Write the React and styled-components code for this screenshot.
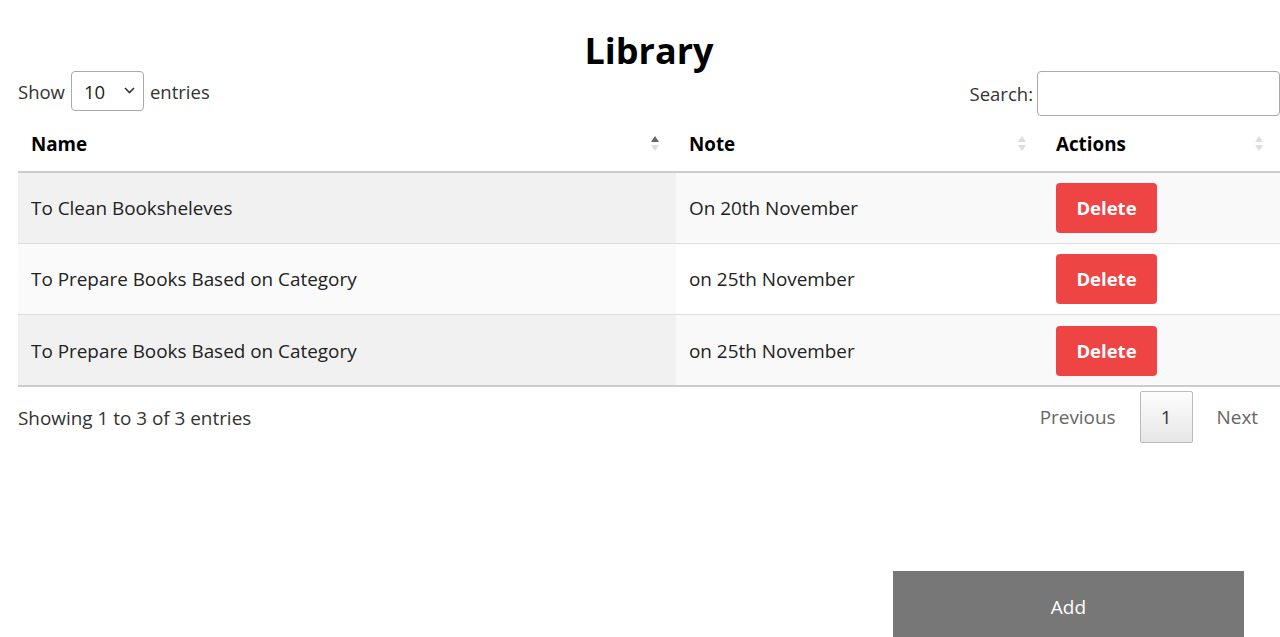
import React from "react";
import styled, { createGlobalStyle } from "styled-components";

const Global = createGlobalStyle`
  html, body { margin: 0; padding: 0; background: #fff; }
  body { font-family: "Open Sans", "Noto Sans", sans-serif; color: #222; overflow: hidden; }
`;

const Page = styled.div`
  width: 1262px;
  margin-left: 18px;
  display: flex;
  flex-direction: column;
`;

const Title = styled.h1`
  margin: 28px 0 0;
  text-align: center;
  font-size: 36px;
  line-height: 46px;
  font-weight: 700;
  color: #000;
  height: 40px;
`;

const Toolbar = styled.div`
  display: flex;
  justify-content: space-between;
  align-items: center;
  height: 46px;
  margin-top: 2px;
`;

const Label = styled.label`
  display: flex;
  align-items: center;
  gap: ${(p) => p.$gap}px;
  font-size: 18.5px;
  color: #333;
  margin-top: ${(p) => p.$mt || 0}px;
`;

const SelectBox = styled.div`
  position: relative;
  width: 73px;
  height: 40px;
  box-sizing: border-box;
  border: 1px solid #aaa;
  border-radius: 4px;
  display: flex;
  align-items: center;
  padding-left: 12px;
  font-size: 18.5px;
  color: #222;
`;

const Chevron = styled.svg`
  position: absolute;
  right: 8px;
  top: 15px;
`;

const SearchInput = styled.input`
  width: 243px;
  height: 45px;
  box-sizing: border-box;
  border: 1px solid #aaa;
  border-radius: 4px;
  font-size: 18px;
`;

const Table = styled.table`
  width: 100%;
  border-collapse: collapse;
  margin-top: 6px;
  table-layout: fixed;
`;

const Th = styled.th`
  position: relative;
  text-align: left;
  height: 50px;
  padding: 0 13px 6px;
  box-sizing: border-box;
  font-size: 18.8px;
  font-weight: 700;
  color: #000;
  border-bottom: 2px solid #ccc;
  width: ${(p) => p.$w}px;
`;

const SortIcon = styled.span`
  position: absolute;
  right: ${(p) => p.$r}px;
  top: 14px;
  display: flex;
  flex-direction: column;
  gap: 3px;
`;

const Tri = styled.span`
  width: 0;
  height: 0;
  border-left: 4px solid transparent;
  border-right: 4px solid transparent;
  ${(p) =>
    p.$up
      ? `border-bottom: 6px solid ${p.$dark ? "#666" : "#ddd"};`
      : `border-top: 6px solid ${p.$dark ? "#666" : "#ddd"};`}
`;

const Tr = styled.tr`
  height: ${(p) => (p.$last ? 72 : 71)}px;
  border-bottom: ${(p) => (p.$last ? "2px solid #ccc" : "1px solid #ddd")};
`;

const Td = styled.td`
  padding: ${(p) => (p.$last ? "2px 13px 0" : "0 13px")};
  font-size: 18.9px;
  color: #222;
  background: ${(p) => p.$bg};
`;

const DeleteBtn = styled.button`
  width: 101px;
  height: 50px;
  border: none;
  border-radius: 4px;
  background: #ef4444;
  color: #fff;
  font-family: "Open Sans", sans-serif;
  font-weight: 700;
  font-size: 18.5px;
  display: flex;
  align-items: center;
  justify-content: center;
`;

const Footer = styled.div`
  display: flex;
  justify-content: space-between;
  align-items: flex-start;
  padding-top: 4px;
`;

const Info = styled.div`
  font-size: 18.9px;
  color: #333;
  padding-top: 14px;
`;

const Pager = styled.div`
  display: flex;
  align-items: center;
  margin-right: -2px;
`;

const PageLink = styled.span`
  font-size: 18.9px;
  color: #666;
  padding: 0 24px;
`;

const PageCurrent = styled.span`
  width: 53px;
  height: 52px;
  box-sizing: border-box;
  border: 1px solid #bbb;
  border-radius: 2px;
  background: linear-gradient(to bottom, #fdfdfd 0%, #e6e6e6 100%);
  display: flex;
  align-items: center;
  justify-content: center;
  font-size: 18.9px;
  color: #333;
`;

const AddRow = styled.div`
  display: flex;
  justify-content: flex-end;
  margin-top: 128px;
  padding-right: 36px;
`;

const AddBtn = styled.button`
  width: 351px;
  height: 72px;
  border: none;
  background: #777;
  color: #fff;
  font-family: "Open Sans", sans-serif;
  font-size: 19px;
  display: flex;
  justify-content: center;
  padding-top: 23px;
  box-sizing: border-box;
`;

const rows = [
  { name: "To Clean Bookshelves".replace("shelves", "sheleves"), note: "On 20th November" },
  { name: "To Prepare Books Based on Category", note: "on 25th November" },
  { name: "To Prepare Books Based on Category", note: "on 25th November" },
];

const Sort = ({ r, active }) => (
  <SortIcon $r={r}>
    <Tri $up $dark={active} />
    <Tri />
  </SortIcon>
);

export default function App() {
  return (
    <>
      <Global />
      <Page>
        <Title>Library</Title>
        <Toolbar>
          <Label $gap={6} $mt={-4}>
            Show
            <SelectBox>
              10
              <Chevron width="11" height="7" viewBox="0 0 11 7">
                <path d="M1 1l4.5 4.5L10 1" fill="none" stroke="#333" strokeWidth="1.6" />
              </Chevron>
            </SelectBox>
            entries
          </Label>
          <Label $gap={4}>
            Search:
            <SearchInput />
          </Label>
        </Toolbar>
        <Table>
          <thead>
            <tr>
              <Th $w={658}>Name<Sort r={17} active /></Th>
              <Th $w={367}>Note<Sort r={17} /></Th>
              <Th $w={237}>Actions<Sort r={17} /></Th>
            </tr>
          </thead>
          <tbody>
            {rows.map((r, i) => {
              const odd = i % 2 === 0;
              const last = i === rows.length - 1;
              return (
                <Tr key={i} $last={last}>
                  <Td $last={last} $bg={odd ? "#f1f1f1" : "#fafafa"}>{r.name}</Td>
                  <Td $last={last} $bg={odd ? "#f9f9f9" : "#fff"}>{r.note}</Td>
                  <Td $last={last} $bg={odd ? "#f9f9f9" : "#fff"}>
                    <DeleteBtn>Delete</DeleteBtn>
                  </Td>
                </Tr>
              );
            })}
          </tbody>
        </Table>
        <Footer>
          <Info>Showing 1 to 3 of 3 entries</Info>
          <Pager>
            <PageLink>Previous</PageLink>
            <PageCurrent>1</PageCurrent>
            <PageLink>Next</PageLink>
          </Pager>
        </Footer>
        <AddRow>
          <AddBtn>Add</AddBtn>
        </AddRow>
      </Page>
    </>
  );
}
